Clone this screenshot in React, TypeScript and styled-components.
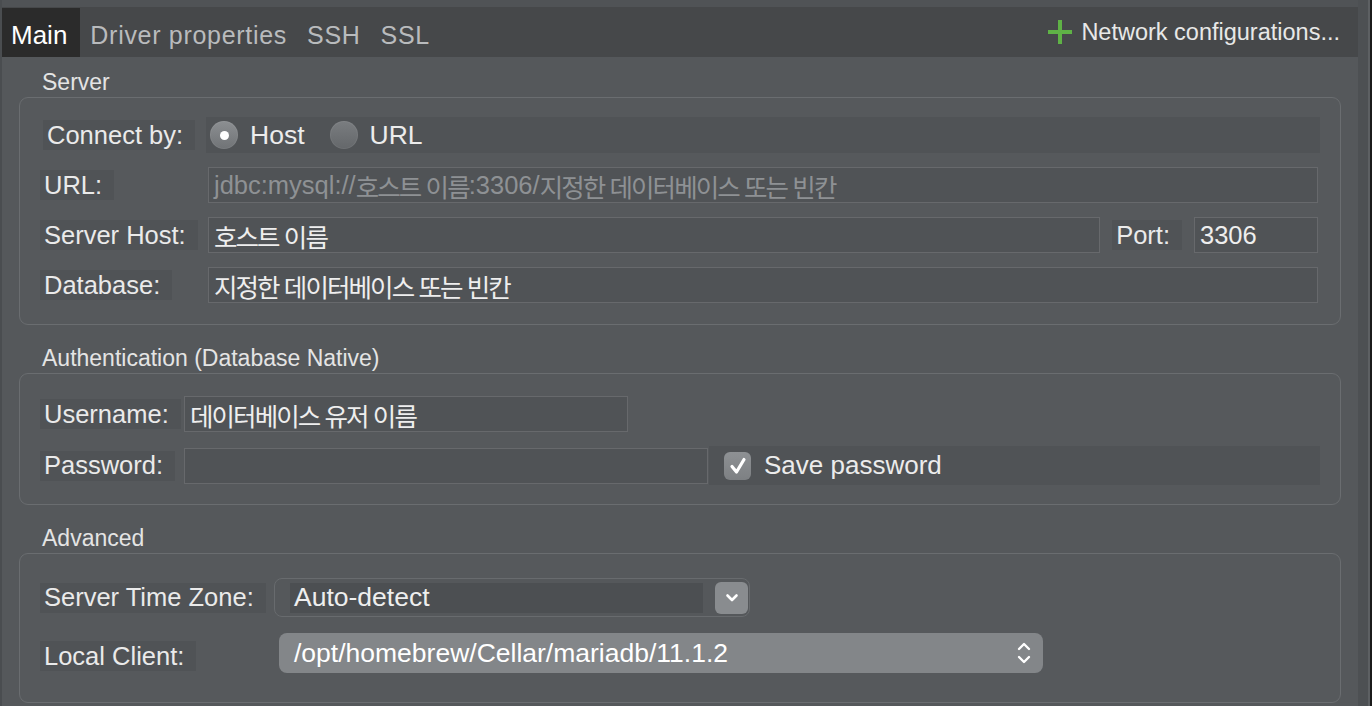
import React from 'react';
import styled, { createGlobalStyle } from 'styled-components';

const GlobalStyle = createGlobalStyle`
  html, body { margin: 0; padding: 0; background: #55585b; }
  body {
    font-family: "Liberation Sans", "Noto Sans CJK KR", sans-serif;
    -webkit-font-smoothing: antialiased;
  }
  #root { width: 1372px; height: 706px; overflow: hidden; }
  * { box-sizing: border-box; }
`;

const Window = styled.div`
  display: flex;
  width: 1372px;
  height: 706px;
  background: #55585b;
  overflow: hidden;
`;

const LeftEdge = styled.div`
  flex: none;
  width: 2px;
  background: #4a4d50;
`;

const MainColumn = styled.div`
  flex: 1;
  min-width: 0;
  display: flex;
  flex-direction: column;
`;

const Gutter = styled.div`
  flex: none;
  width: 12px;
  background: #4d5053;
  border-right: 2px solid #5d6063;
`;

const Frame = styled.div`
  flex: none;
  width: 2px;
  background: #1b1b1b;
`;

const TopStrip = styled.div`
  height: 7px;
  background: #505356;
`;

const TabBar = styled.div`
  height: 50px;
  display: flex;
  align-items: stretch;
  background: #46484a;
`;

const Tab = styled.div<{ $active?: boolean }>`
  display: flex;
  align-items: center;
  margin-top: 1px;
  padding: ${p => (p.$active ? '5px 13px 0 9px' : '5px 10px 0 10px')};
  background: ${p => (p.$active ? '#2b2b2b' : 'transparent')};
  color: ${p => (p.$active ? '#ffffff' : '#b9bbbd')};
  font-size: ${p => (p.$active ? '26px' : '25px')};
  letter-spacing: ${p => (p.$active ? '0' : '0.7px')};
  white-space: nowrap;
`;

const NetworkButton = styled.div`
  margin-left: auto;
  display: flex;
  align-items: center;
  gap: 9px;
  padding: 0 18px 0 0;
  color: #e8e8e8;
  font-size: 23.5px;
  white-space: nowrap;
`;

const Body = styled.div`
  display: flex;
  flex-direction: column;
  gap: 20px;
  padding-top: 12px;
`;

const Section = styled.section`
  display: flex;
  flex-direction: column;
`;

const SectionTitle = styled.div`
  height: 26px;
  line-height: 26px;
  margin-bottom: 2px;
  padding-left: 40px;
  color: #e4e4e4;
  font-size: 23px;
`;

const GroupBox = styled.div<{ $pad: string; $gap: number }>`
  margin: 0 17px;
  border: 1px solid #6a6d70;
  border-radius: 9px;
  background: #56595c;
  padding: ${p => p.$pad};
  display: flex;
  flex-direction: column;
  gap: ${p => p.$gap}px;
`;

const FieldRow = styled.div<{ $label: number; $height: number; $align?: string }>`
  display: grid;
  grid-template-columns: ${p => p.$label}px 1fr;
  align-items: ${p => p.$align || 'center'};
  height: ${p => p.$height}px;
`;

const LabelCell = styled.div<{ $shift?: number; $lift?: number }>`
  justify-self: start;
  display: flex;
  align-items: center;
  height: 30px;
  margin-left: ${p => p.$shift || 0}px;
  margin-bottom: ${p => p.$lift || 0}px;
  padding: 0 12px 0 4px;
  background: #505356;
  color: #eaeaea;
  font-size: 25.5px;
  white-space: nowrap;
`;

const RadioGroup = styled.div`
  display: flex;
  align-items: center;
  height: 36px;
  margin: 0 -2px;
  padding-left: 4px;
  background: #505356;
`;

const RadioOption = styled.label`
  display: flex;
  align-items: center;
  gap: 12px;
  margin-right: 25px;
  color: #ececec;
  font-size: 26.5px;
`;

const RadioCircle = styled.span<{ $checked?: boolean }>`
  width: 28px;
  height: 28px;
  border-radius: 50%;
  display: flex;
  align-items: center;
  justify-content: center;
  background: ${p =>
    p.$checked
      ? 'linear-gradient(#8c8f92, #707376)'
      : 'linear-gradient(#7a7d80, #64676a)'};
  box-shadow: inset 0 0 0 1px rgba(255, 255, 255, 0.06);
  &::after {
    content: '';
    display: ${p => (p.$checked ? 'block' : 'none')};
    width: 9px;
    height: 9px;
    border-radius: 50%;
    background: #ffffff;
  }
`;

const TextBox = styled.div<{ $width?: number; $disabled?: boolean }>`
  width: ${p => (p.$width ? `${p.$width}px` : 'auto')};
  flex: ${p => (p.$width ? 'none' : '1')};
  min-width: 0;
  height: 36px;
  display: flex;
  align-items: center;
  padding: 0 5px;
  border: 1px solid #67696c;
  background: #505356;
  color: ${p => (p.$disabled ? '#8e9194' : '#eeeeee')};
  font-size: 25.5px;
  white-space: nowrap;
  overflow: hidden;
`;

const Hangul = styled.span`
  letter-spacing: -1.9px;
`;

const HostGroup = styled.div`
  display: flex;
  align-items: center;
  gap: 12px;
`;

const PasswordGroup = styled.div`
  display: flex;
  align-items: center;
  gap: 1px;
  margin-right: -2px;
`;

const CheckCell = styled.label`
  flex: 1;
  display: flex;
  align-items: center;
  gap: 13px;
  height: 39px;
  padding-left: 15px;
  background: #505356;
  color: #ececec;
  font-size: 26px;
`;

const CheckBox = styled.span`
  width: 27px;
  height: 28px;
  border-radius: 6px;
  background: linear-gradient(#8e9194, #7d8083);
  display: flex;
  align-items: center;
  justify-content: center;
`;

const Combo = styled.div`
  width: 476px;
  height: 39px;
  display: flex;
  align-items: center;
  gap: 12px;
  padding: 0 1px 0 15px;
  border: 1px solid #686b6e;
  border-radius: 8px;
  background: #55585b;
`;

const ComboText = styled.div`
  flex: 1;
  height: 30px;
  display: flex;
  align-items: center;
  padding-left: 4px;
  background: #4c4f52;
  color: #eeeeee;
  font-size: 26.5px;
`;

const ComboButton = styled.div`
  width: 33px;
  height: 32px;
  border-radius: 6px;
  background: #898c8f;
  display: flex;
  align-items: center;
  justify-content: center;
`;

const Select = styled.div`
  width: 764px;
  height: 40px;
  display: flex;
  align-items: center;
  justify-content: space-between;
  padding: 0 11px 0 15px;
  border-radius: 8px;
  background: #838689;
  color: #ffffff;
  font-size: 26.5px;
`;

const PlusIcon = () => (
  <svg width="24" height="24" viewBox="0 0 24 24">
    <path d="M12 0 V24 M0 12 H24" stroke="#5fb246" strokeWidth="4" fill="none" />
  </svg>
);

const CheckIcon = () => (
  <svg width="20" height="20" viewBox="0 0 20 20">
    <path d="M4 10.5 L8.5 16 L16 3.5" stroke="#ffffff" strokeWidth="3.2" fill="none" strokeLinecap="round" strokeLinejoin="round" />
  </svg>
);

const ChevronDown = () => (
  <svg width="16" height="12" viewBox="0 0 16 12">
    <path d="M3.5 3.5 L8 8 L12.5 3.5" stroke="#ffffff" strokeWidth="2.6" fill="none" strokeLinecap="round" strokeLinejoin="round" />
  </svg>
);

const UpDown = () => (
  <svg width="16" height="26" viewBox="0 0 16 26">
    <path d="M3 9 L8 4 L13 9 M3 17 L8 22 L13 17" stroke="#ffffff" strokeWidth="2.4" fill="none" strokeLinecap="round" strokeLinejoin="round" />
  </svg>
);

export default function App() {
  return (
    <>
      <GlobalStyle />
      <Window>
        <LeftEdge />
        <MainColumn>
          <TopStrip />
          <TabBar>
            <Tab $active>Main</Tab>
            <Tab>Driver properties</Tab>
            <Tab>SSH</Tab>
            <Tab>SSL</Tab>
            <NetworkButton>
              <PlusIcon />
              Network configurations...
            </NetworkButton>
          </TabBar>
          <Body>
            <Section>
              <SectionTitle>Server</SectionTitle>
              <GroupBox $pad="19px 22px 21px 20px" $gap={14}>
                <FieldRow $label={168} $height={36}>
                  <LabelCell $shift={3}>Connect by:</LabelCell>
                  <RadioGroup>
                    <RadioOption>
                      <RadioCircle $checked />
                      Host
                    </RadioOption>
                    <RadioOption>
                      <RadioCircle />
                      URL
                    </RadioOption>
                  </RadioGroup>
                </FieldRow>
                <FieldRow $label={168} $height={36}>
                  <LabelCell>URL:</LabelCell>
                  <TextBox $disabled>
                    jdbc:mysql://<Hangul>호스트 이름</Hangul>:3306/<Hangul>지정한 데이터베이스 또는 빈칸</Hangul>
                  </TextBox>
                </FieldRow>
                <FieldRow $label={168} $height={36}>
                  <LabelCell>Server Host:</LabelCell>
                  <HostGroup>
                    <TextBox>
                      <Hangul>호스트 이름</Hangul>
                    </TextBox>
                    <LabelCell>Port:</LabelCell>
                    <TextBox $width={124}>3306</TextBox>
                  </HostGroup>
                </FieldRow>
                <FieldRow $label={168} $height={36}>
                  <LabelCell>Database:</LabelCell>
                  <TextBox>
                    <Hangul>지정한 데이터베이스 또는 빈칸</Hangul>
                  </TextBox>
                </FieldRow>
              </GroupBox>
            </Section>

            <Section>
              <SectionTitle>Authentication (Database Native)</SectionTitle>
              <GroupBox $pad="22px 22px 22px 20px" $gap={14}>
                <FieldRow $label={144} $height={36}>
                  <LabelCell>Username:</LabelCell>
                  <TextBox $width={444}>
                    <Hangul>데이터베이스 유저 이름</Hangul>
                  </TextBox>
                </FieldRow>
                <FieldRow $label={144} $height={36}>
                  <LabelCell>Password:</LabelCell>
                  <PasswordGroup>
                    <TextBox $width={524} />
                    <CheckCell>
                      <CheckBox>
                        <CheckIcon />
                      </CheckBox>
                      Save password
                    </CheckCell>
                  </PasswordGroup>
                </FieldRow>
              </GroupBox>
            </Section>

            <Section>
              <SectionTitle>Advanced</SectionTitle>
              <GroupBox $pad="24px 22px 29px 20px" $gap={16}>
                <FieldRow $label={234} $height={39}>
                  <LabelCell>Server Time Zone:</LabelCell>
                  <Combo>
                    <ComboText>Auto-detect</ComboText>
                    <ComboButton>
                      <ChevronDown />
                    </ComboButton>
                  </Combo>
                </FieldRow>
                <FieldRow $label={239} $height={40} $align="end">
                  <LabelCell $lift={2}>Local Client:</LabelCell>
                  <Select>
                    /opt/homebrew/Cellar/mariadb/11.1.2
                    <UpDown />
                  </Select>
                </FieldRow>
              </GroupBox>
            </Section>
          </Body>
        </MainColumn>
        <Gutter />
        <Frame />
      </Window>
    </>
  );
}
